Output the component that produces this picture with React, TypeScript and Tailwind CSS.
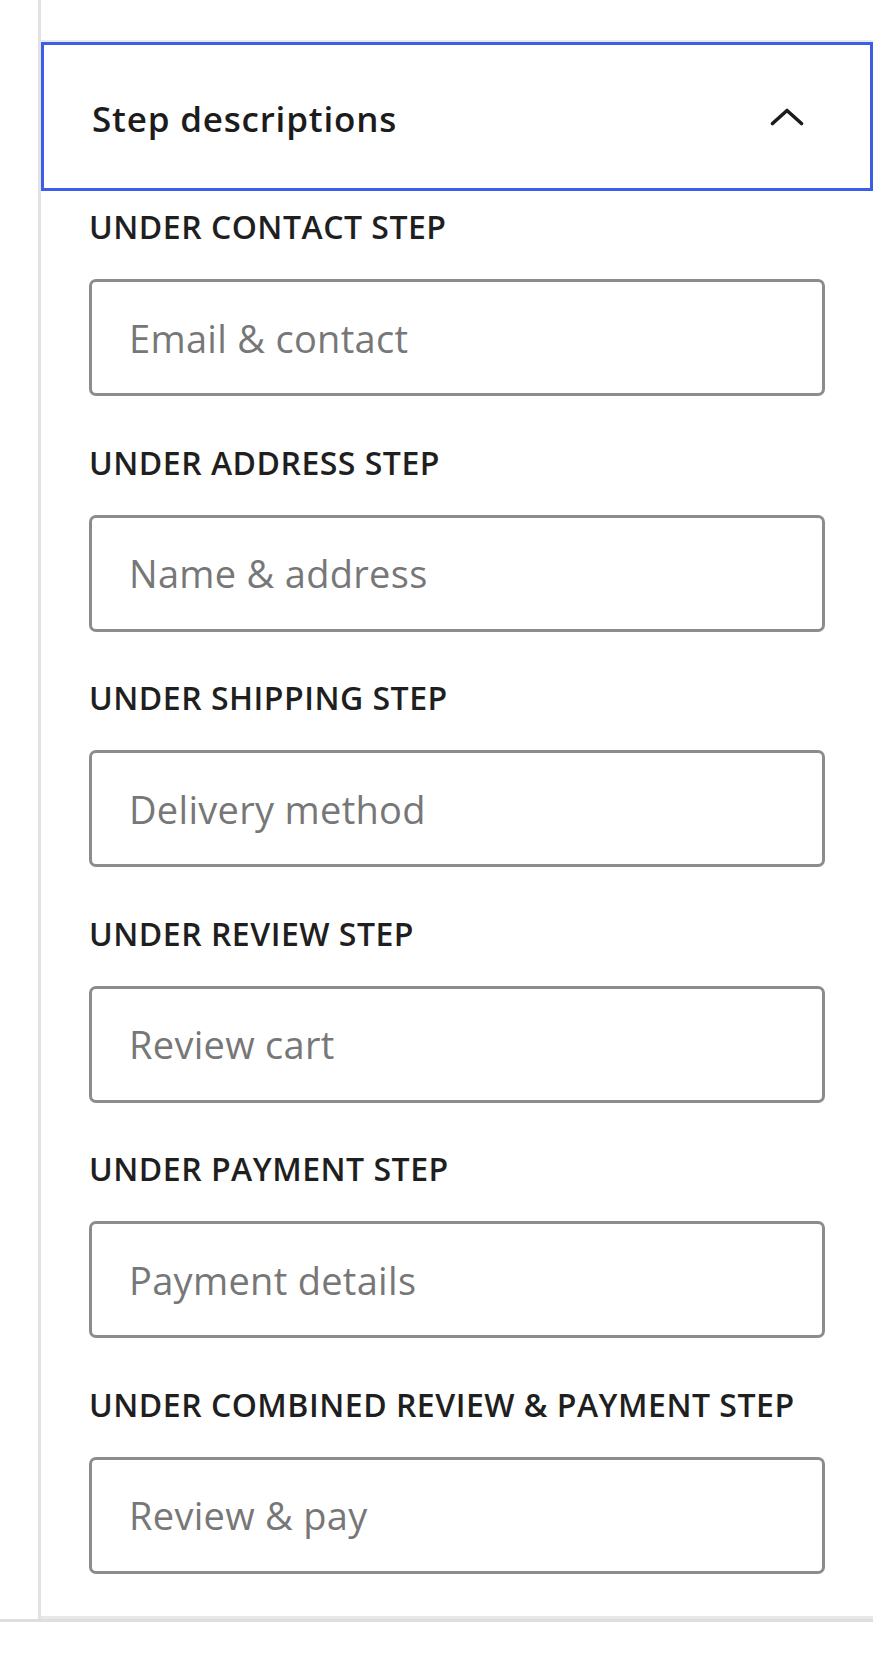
import { useState } from "react";

const steps = [
  { label: "Under contact step", placeholder: "Email & contact" },
  { label: "Under address step", placeholder: "Name & address" },
  { label: "Under shipping step", placeholder: "Delivery method" },
  { label: "Under review step", placeholder: "Review cart" },
  { label: "Under payment step", placeholder: "Payment details" },
  { label: "Under combined review & payment step", placeholder: "Review & pay" },
];

const ChevronUp = () => (
  <svg width="34" height="18" viewBox="0 0 34 18" fill="none">
    <polyline
      points="2.5,15.5 17,2.5 31.5,15.5"
      stroke="#1c1c1c"
      strokeWidth="3.6"
      strokeLinecap="round"
      strokeLinejoin="round"
    />
  </svg>
);

export default function App() {
  const [open, setOpen] = useState(true);
  const [values, setValues] = useState<string[]>(steps.map(() => ""));

  return (
    <div className="min-h-[1662px] w-full bg-white font-['Open_Sans',sans-serif]">
      <div className="border-b-[3px] border-[#dedede]">
        <div className="ml-[38px] border-l-[3px] border-[#e2e2e2] pt-[40px]">
          <div className="border-t-2 border-b-[3px] border-[#e8e8e8]">
            {/* Accordion header */}
            <button
              type="button"
              onClick={() => setOpen(!open)}
              className="flex h-[149px] w-full items-center justify-between border-[3px] border-[#3b5de7] pl-[48px] pr-[66px] text-left"
            >
              <span className="pt-[4px] text-[35px] font-semibold leading-none tracking-[0.8px] text-[#1c1c1c]">
                Step descriptions
              </span>
              <ChevronUp />
            </button>

            {open && (
              <div className="flex flex-col gap-[46.6px] px-[48px] pb-[42px] pt-[16px]">
                {steps.map((step, i) => (
                  <div key={step.label} className="flex flex-col gap-[32px]">
                    <label className="text-[32px] font-semibold uppercase leading-[40px] tracking-[0.5px] text-[#1f1f1f]">
                      {step.label}
                    </label>
                    <input
                      type="text"
                      value={values[i]}
                      onChange={(e) => {
                        const next = [...values];
                        next[i] = e.target.value;
                        setValues(next);
                      }}
                      placeholder={step.placeholder}
                      className="h-[117px] w-full rounded-[7px] border-[3px] border-[#8c8c8c] px-[37px] text-[38px] tracking-[0.3px] text-[#1f1f1f] placeholder:text-[#777777] outline-none"
                    />
                  </div>
                ))}
              </div>
            )}
          </div>
        </div>
      </div>
    </div>
  );
}
